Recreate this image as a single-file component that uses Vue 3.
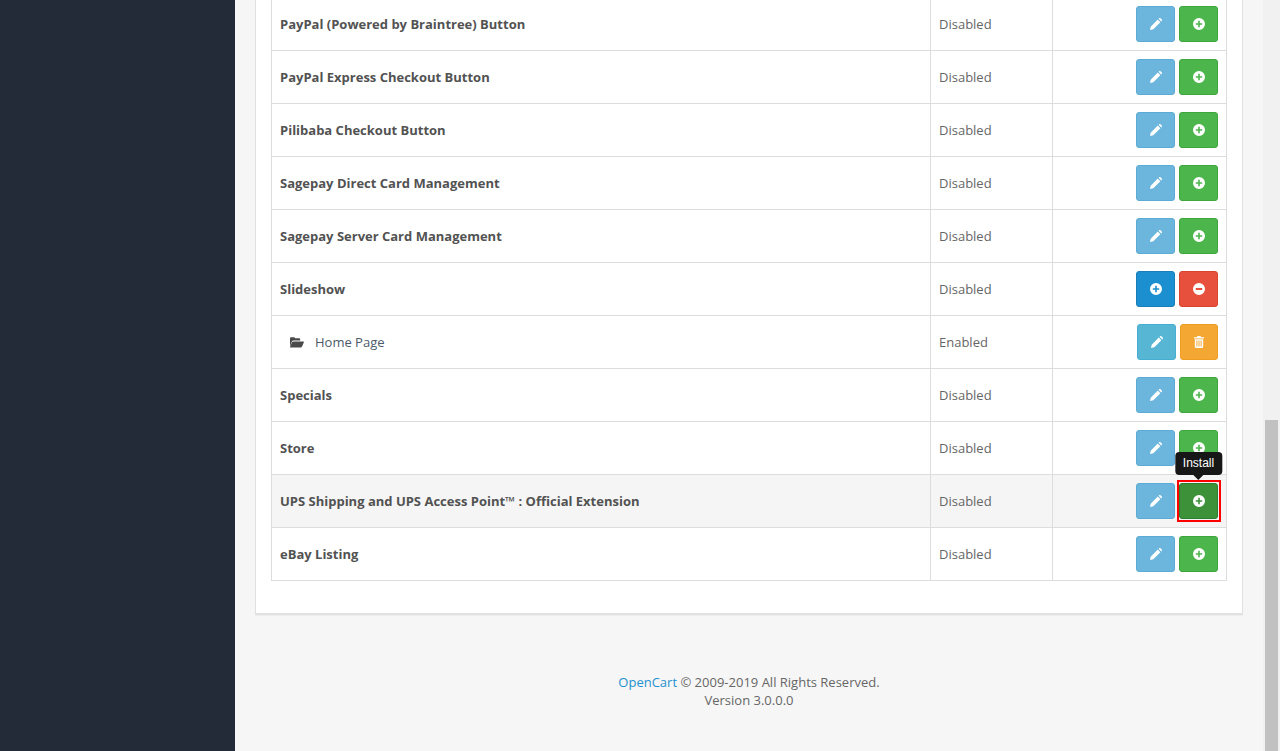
<script setup>
const rows = [
  { name: 'PayPal (Powered by Braintree) Button', status: 'Disabled', kind: 'off' },
  { name: 'PayPal Express Checkout Button', status: 'Disabled', kind: 'off' },
  { name: 'Pilibaba Checkout Button', status: 'Disabled', kind: 'off' },
  { name: 'Sagepay Direct Card Management', status: 'Disabled', kind: 'off' },
  { name: 'Sagepay Server Card Management', status: 'Disabled', kind: 'off' },
  { name: 'Slideshow', status: 'Disabled', kind: 'group' },
  { name: 'Home Page', status: 'Enabled', kind: 'child' },
  { name: 'Specials', status: 'Disabled', kind: 'off' },
  { name: 'Store', status: 'Disabled', kind: 'off' },
  { name: 'UPS Shipping and UPS Access Point™ : Official Extension', status: 'Disabled', kind: 'active' },
  { name: 'eBay Listing', status: 'Disabled', kind: 'off' }
]
</script>

<template>
  <div class="page">
    <aside class="sidebar"></aside>
    <main class="main">
      <section class="panel">
        <div class="table">
          <div v-for="row in rows" :key="row.name" class="row" :class="{ hover: row.kind === 'active' }">
            <div class="cell name">
              <template v-if="row.kind === 'child'">
                <svg class="folder" viewBox="0 0 14 11" width="14" height="11">
                  <path d="M0 9.6V1.4C0 .7.5.2 1.2.2h2.6c.7 0 1.2.5 1.2 1.1h4c.7 0 1.2.5 1.2 1.2v1H3.4C2.7 3.5 2.200 3.800 1.900 4.400z" fill="#4a4a4a" />
                  <path d="M3.300 4.400H13.300c.5 0 .8.500.6.900l-2 4.500c-.2.500-.7.800-1.200.800H.7c-.5 0-.8-.5-.6-.9L2 5.200c.3-.5.800-.8 1.300-.8z" fill="#4a4a4a" />
                </svg>
                <span class="child-name">{{ row.name }}</span>
              </template>
              <b v-else>{{ row.name }}</b>
            </div>
            <div class="cell status">{{ row.status }}</div>
            <div class="cell actions">
              <template v-if="row.kind === 'group'">
                <span class="btn blue">
                  <svg viewBox="0 0 12 12" width="12" height="12"><path d="M6 0a6 6 0 1 0 0 12A6 6 0 0 0 6 0zM5.200 2.800h1.600v2.400h2.400v1.600H6.800v2.400H5.200V6.800H2.800V5.200h2.400z" fill="#fff" fill-rule="evenodd" /></svg>
                </span>
                <span class="btn red">
                  <svg viewBox="0 0 12 12" width="12" height="12"><path d="M6 0a6 6 0 1 0 0 12A6 6 0 0 0 6 0zM2.800 5.100h6.400v1.800H2.800z" fill="#fff" fill-rule="evenodd" /></svg>
                </span>
              </template>
              <template v-else-if="row.kind === 'child'">
                <span class="btn cyan">
                  <svg viewBox="0 0 12 12" width="12" height="12"><path d="M0 12l.7-3.300L7.800 1.600l2.600 2.600-7.100 7.100zM8.600.8l.5-.5c.4-.4 1-.4 1.400 0l1.200 1.200c.4.400.4 1 0 1.400l-.5.500z" fill="#fff" /></svg>
                </span>
                <span class="btn orange">
                  <svg viewBox="0 0 10 12" width="10" height="12"><path d="M3.500 0h3l.6 1.200H10v1.300H0V1.200h2.900zM.8 3.200h8.400v7.600c0 .7-.5 1.200-1.100 1.200H1.900c-.6 0-1.100-.5-1.100-1.200zM2.400 4.500v6h1v-6zm2.100 0v6h1v-6zm2.100 0v6h1v-6z" fill="#fff" fill-rule="evenodd" /></svg>
                </span>
              </template>
              <template v-else>
                <span class="btn sky">
                  <svg viewBox="0 0 12 12" width="12" height="12"><path d="M0 12l.7-3.300L7.800 1.600l2.600 2.600-7.100 7.100zM8.600.8l.5-.5c.4-.4 1-.4 1.400 0l1.200 1.200c.4.400.4 1 0 1.400l-.5.500z" fill="#fff" /></svg>
                </span>
                <span class="btn green" :class="{ pressed: row.kind === 'active' }">
                  <svg viewBox="0 0 12 12" width="12" height="12"><path d="M6 0a6 6 0 1 0 0 12A6 6 0 0 0 6 0zM5.200 2.800h1.600v2.400h2.400v1.600H6.800v2.400H5.200V6.800H2.800V5.200h2.400z" fill="#fff" fill-rule="evenodd" /></svg>
                  <span v-if="row.kind === 'active'" class="tip">Install</span>
                </span>
              </template>
            </div>
          </div>
        </div>
      </section>
      <footer class="footer">
        <div><a class="link">OpenCart</a> © 2009-2019 All Rights Reserved.</div>
        <div>Version 3.0.0.0</div>
      </footer>
    </main>
    <div class="scrollbar"><div class="thumb"></div></div>
  </div>
</template>

<style>
html, body { margin: 0; overflow: hidden; }
</style>

<style scoped>
.page {
  display: flex;
  width: 1280px;
  height: 751px;
  overflow: hidden;
  background: #f6f6f6;
  font-family: "Open Sans", sans-serif;
  font-size: 13px;
  color: #666;
}
.sidebar { flex: 0 0 235px; background: #232a38; }
.main { flex: 1; min-width: 0; padding: 0 20px; }
.panel {
  box-sizing: border-box;
  height: 615px;
  padding: 0 15px;
  background: #fff;
  border: 1px solid #e1e1e1;
  border-top: 0;
  border-bottom: 2px solid #e1e1e1;
  box-shadow: 0 1px 1px rgba(0, 0, 0, .03);
  overflow: hidden;
}
.table {
  margin-top: -2px;
  border-left: 1px solid #ddd;
  border-right: 1px solid #ddd;
}
.row {
  display: grid;
  grid-template-columns: 658px 122px 1fr;
  height: 53px;
  box-sizing: border-box;
  border-bottom: 1px solid #ddd;
}
.row.hover { background: #f5f5f5; }
.cell {
  display: flex;
  align-items: center;
  padding: 0 8px;
  min-width: 0;
}
.status, .actions { border-left: 1px solid #ddd; }
.name b { font-weight: 700; color: #525252; }
.folder { margin-left: 10px; margin-right: 11px; }
.child-name { color: #4c5a68; }
.actions { justify-content: flex-end; gap: 4px; }
.btn {
  position: relative;
  display: flex;
  align-items: center;
  justify-content: center;
  box-sizing: border-box;
  width: 39px;
  height: 36px;
  border-radius: 3px;
  border: 1px solid;
}
.sky { background: #6cb5dc; border-color: #5cabd6; }
.green { background: #4cb64c; border-color: #3da63d; }
.blue { background: #1b8fcf; border-color: #1a7fb8; }
.red { background: #e7503c; border-color: #d94430; }
.cyan { background: #58b6d5; border-color: #46afd1; width: 39px; }
.orange { background: #f5a733; border-color: #ef9d22; width: 38px; }
.pressed { background: #3c9139; border-color: #2f7d2f; }
.pressed::before {
  content: "";
  position: absolute;
  top: -4px;
  right: -4px;
  bottom: -4px;
  left: -3px;
  border: 2px solid #f00;
}
.tip {
  position: absolute;
  left: 50%;
  bottom: 43px;
  transform: translateX(-50%);
  padding: 4px 8px;
  background: #171717;
  border-radius: 4px;
  color: #fff;
  font-family: "Liberation Sans", sans-serif;
  font-size: 12px;
  line-height: 15px;
  z-index: 2;
}
.tip::after {
  content: "";
  position: absolute;
  left: 50%;
  bottom: -5px;
  margin-left: -5px;
  border: 5px solid transparent;
  border-bottom: 0;
  border-top-color: #171717;
}
.footer {
  margin-top: 58px;
  text-align: center;
  line-height: 18px;
}
.link { color: #1e91cf; }
.scrollbar { flex: 0 0 17px; background: #f1f1f1; }
.thumb { width: 13px; margin: 420px 2px 0; height: 331px; background: #c1c1c1; }
</style>
